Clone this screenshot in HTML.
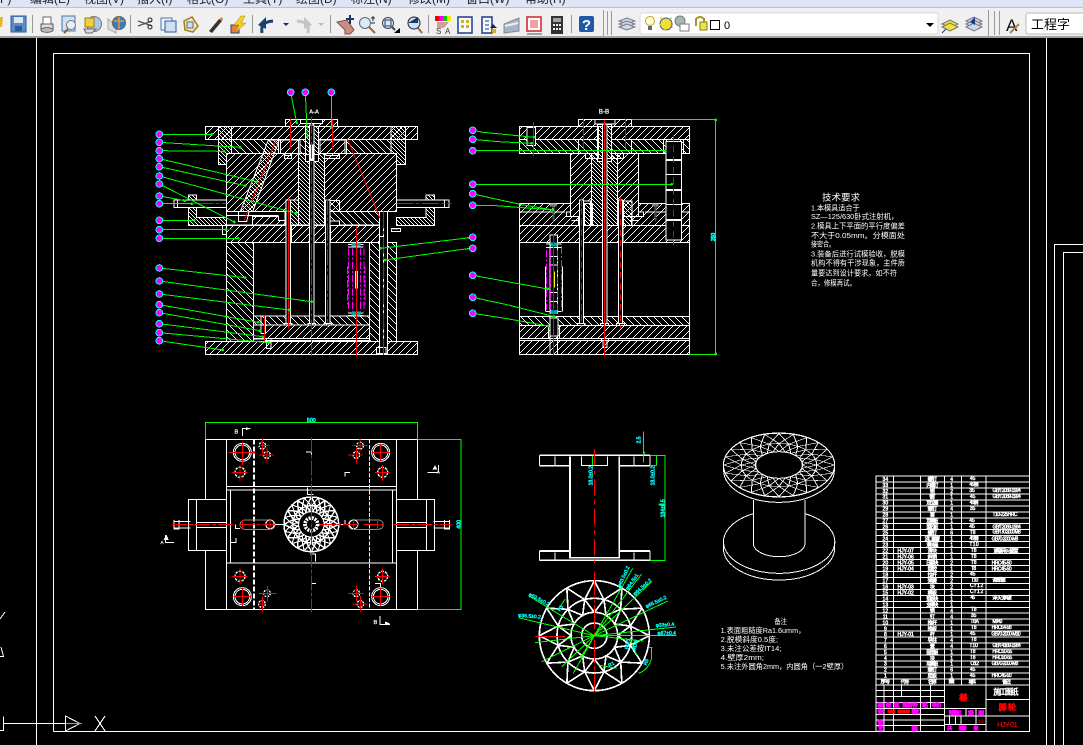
<!DOCTYPE html>
<html><head><meta charset="utf-8"><style>
html,body{margin:0;padding:0;background:#000;width:1083px;height:745px;overflow:hidden}
svg{display:block}
text{font-family:"Liberation Sans","Noto Sans CJK SC",sans-serif}
.d{shape-rendering:crispEdges}
.o{fill:none;stroke:#fff;stroke-width:3}
.k{fill:#000;stroke:#fff;stroke-width:3}
.a{fill:url(#h1);stroke:#fff;stroke-width:3}
.b{fill:url(#h2);stroke:#fff;stroke-width:3}
.c{fill:url(#h3);stroke:#fff;stroke-width:3}
.r{fill:none;stroke:#f00;stroke-width:3}
.rd{fill:none;stroke:#f00;stroke-width:3;stroke-dasharray:50 8 10 8}
.g{fill:none;stroke:#0f0;stroke-width:3}
.dot{fill:none;stroke:#0f0;stroke-width:8;stroke-linecap:round}
.m{fill:none;stroke:#f0f;stroke-width:3;stroke-dasharray:22 6 6 6}
.bub{fill:#f0f;stroke:#0ff;stroke-width:3}
.t{fill:#fff;stroke:#fff;stroke-width:.7;font-size:15px;text-anchor:middle}
.w{fill:#fff;font-size:23px}
.cy{fill:#0ff;stroke:#0ff;stroke-width:.6;font-size:15px;text-anchor:middle}
.mg{fill:#f0f;stroke:#f0f;stroke-width:1;font-size:15px;text-anchor:middle}
.rt{fill:#f00;stroke:#f00;stroke-width:1;text-anchor:middle}
.menu{font-size:12px;fill:#222}
</style></head><body>
<svg width="1083" height="745" viewBox="0 0 1083 745" xmlns="http://www.w3.org/2000/svg">
<defs>
<pattern id="h1" width="21" height="21" patternUnits="userSpaceOnUse"><path fill="#fff" shape-rendering="crispEdges" d="M18 0h3v3h-3zM15 3h3v3h-3zM12 6h3v3h-3zM9 9h3v3h-3zM6 12h3v3h-3zM3 15h3v3h-3zM0 18h3v3h-3z"/></pattern>
<pattern id="h2" width="21" height="21" patternUnits="userSpaceOnUse"><path fill="#fff" shape-rendering="crispEdges" d="M0 0h3v3h-3zM3 3h3v3h-3zM6 6h3v3h-3zM9 9h3v3h-3zM12 12h3v3h-3zM15 15h3v3h-3zM18 18h3v3h-3z"/></pattern>
<pattern id="h3" width="12" height="12" patternUnits="userSpaceOnUse"><path fill="#fff" shape-rendering="crispEdges" d="M0 0h3v3h-3zM3 3h3v3h-3zM6 6h3v3h-3zM9 9h3v3h-3z"/></pattern>
<circle id="bu" r="10" class="bub"/>
<path id="wd" d="M0 -165L29 -108.2L82.5 -142.9M29 -108.2L35 -60.6L79.2 -79.2"/>
<g id="wheel" fill="none" stroke="#fff">
<circle r="165"/><circle r="112"/><circle r="70"/><circle r="38"/>
<use href="#wd"/><use href="#wd" transform="rotate(30)"/><use href="#wd" transform="rotate(60)"/><use href="#wd" transform="rotate(90)"/><use href="#wd" transform="rotate(120)"/><use href="#wd" transform="rotate(150)"/><use href="#wd" transform="rotate(180)"/><use href="#wd" transform="rotate(210)"/><use href="#wd" transform="rotate(240)"/><use href="#wd" transform="rotate(270)"/><use href="#wd" transform="rotate(300)"/><use href="#wd" transform="rotate(330)"/>
</g>
</defs>
<rect width="1083" height="745" fill="#000"/>

<!-- frames -->
<g class="d" fill="none" stroke="#fff" stroke-width="1">
<path d="M36.5 38V745M1046.5 38V745"/>
<path d="M53.5 731.5V53.5H1029.5V731.5H53.5"/>
<path d="M1083 244.5H1054.5V745M1083 252.5H1063.5V745"/>
<path d="M4 723.5H65M3.5 716.5V730.5H0M65.5 716V731L80 723.5ZM95 716L105 731M105 716L95 731M0 619L5 612M0 656.5H3.5L1 647"/>
</g>
<path class="d" d="M66 723.5H82" stroke="#999" fill="none"/>

<!-- MAIN SECTION -->
<g class="d" transform="translate(150,85) scale(.333333333)">
<rect class="a" x="406" y="103" width="157" height="21"/>
<rect class="k" x="452" y="103" width="66" height="12"/>
<rect class="a" x="166" y="124" width="637" height="40"/>
<rect class="b" x="245" y="164" width="478" height="42"/>
<path class="c" d="M205 124H245V206H229V239H205Z"/>
<path class="c" d="M723 124H767V239H740V206H723Z"/>
<path class="k" d="M385 165H450V205H425V220H403V205H385Z"/>
<path class="a" d="M392 165H445V205H424V212H405V205H392Z"/>
<path class="k" d="M505 165H590V205H568V220H523V205H505Z"/>
<path class="a" d="M510 165H585V205H566V212H528V205H510Z"/>
<rect class="a" x="229" y="206" width="216" height="174"/>
<rect class="a" x="523" y="206" width="217" height="174"/>
<rect class="c" x="445" y="206" width="78" height="214"/>
<path class="k" d="M466 124H506V230H466Z"/>
<rect class="c" x="466" y="124" width="12" height="85"/>
<rect class="c" x="492" y="124" width="14" height="85"/>
<path class="c" d="M355 165H388L297 410H265V395Z"/>
<path class="k" d="M229 380H405V420H229Z"/>
<path class="a" d="M307 395H385V407H405V420H307Z"/>
<path class="k" d="M265 380H297L290 410H265Z"/>
<path class="o" d="M229 392H385"/>
<path class="b" d="M540 347H568V380H688V420H568V408H540Z"/>
<path class="k" d="M420 345H445V420H420Z"/>
<rect class="c" x="422" y="345" width="23" height="75"/>
<rect class="c" x="115" y="330" width="25" height="15"/>
<rect class="c" x="828" y="330" width="26" height="15"/>
<path class="c" d="M115 368H140V397H229V421H115Z"/>
<path class="c" d="M854 368H828V397H740V421H854Z"/>
<rect class="k" x="72" y="345" width="157" height="23"/>
<rect class="k" x="740" y="345" width="157" height="23"/>
<path class="o" d="M82 345V368M884 345V368M217 421V449H229M752 430H725V440H752Z"/>
<rect class="a" x="229" y="421" width="181" height="52"/>
<rect class="a" x="424" y="421" width="54" height="52"/>
<rect class="a" x="492" y="421" width="34" height="52"/>
<rect class="a" x="541" y="421" width="147" height="52"/>
<rect class="b" x="229" y="473" width="82" height="296"/>
<rect class="b" x="658" y="473" width="30" height="296"/>
<rect class="b" x="712" y="473" width="28" height="296"/>
<rect class="b" x="311" y="693" width="347" height="27"/>
<rect class="a" x="343" y="720" width="315" height="40"/>
<rect class="k" x="311" y="720" width="32" height="42"/>
<path class="o" d="M311 760H658M343 766H658"/>
<rect class="a" x="166" y="769" width="637" height="40"/>
<rect class="k" x="408" y="345" width="14" height="370"/>
<rect class="k" x="478" y="120" width="14" height="595"/>
<rect class="k" x="526" y="345" width="14" height="370"/>
<path class="o" d="M404 715H426V720H404ZM474 715H496V720H474ZM522 715H544V720H522Z" stroke-width="4"/>
<rect class="k" x="688" y="380" width="24" height="425"/>
<path class="o" d="M700 380V790M680 787H708V805H680ZM688 455H700M333 695V745H346V695M350 760V790H363V760"/>
<rect x="478" y="178" width="14" height="50" fill="#fff"/>
<!-- spring -->
<path class="m" d="M596 490V680M607 490V680M631 490V680M642 490V680M592 545V665M645 545V665"/>
<path d="M594 478H640M594 692H640M594 486H640M594 684H640" stroke="#fff" stroke-width="3"/>
<rect x="605" y="474" width="26" height="10" fill="#0aa"/><rect x="605" y="680" width="26" height="12" fill="#0aa"/>
<rect x="615" y="558" width="9" height="52" fill="#ff0"/>
<!-- reds -->
<path class="r" d="M421 100V190M547 103V190M592 160L690 400M415 340V730M619 425V815M343 690V770M232 434H248M724 434H745"/>
<path class="rd" d="M484 95V815M532 340V730M700 380V815M140 355H229M740 355H905M378 165L282 408M90 355H140"/>
<!-- leaders -->
<path class="g" d="M28 148H185M28 172L155 180L270 187M28 197L222 199M28 221L320 290M28 245L285 302M28 273L290 345L438 385M28 297L253 411M28 333L105 347M28 356H125M28 406H133M28 434H228M28 460H265M28 549L285 578M28 588L485 650M28 627L418 675M28 659L325 712M28 683L330 737M28 716L338 755M28 743L357 773M28 767L218 795M422 22L440 113M466 22L472 155M544 22V127M960 458L692 490M960 490L705 525"/>
<path class="dot" d="M185 148h0M270 187h0M222 199h0M320 290h0M285 302h0M438 385h0M253 411h0M105 347h0M125 356h0M133 406h0M228 434h0M265 460h0M285 578h0M485 650h0M418 675h0M325 712h0M330 737h0M338 755h0M357 773h0M218 795h0M440 113h0M472 155h0M544 127h0M692 490h0M705 525h0"/>
<g>
<use href="#bu" x="28" y="148"/><use href="#bu" x="28" y="172"/><use href="#bu" x="28" y="197"/><use href="#bu" x="28" y="221"/><use href="#bu" x="28" y="245"/><use href="#bu" x="28" y="273"/><use href="#bu" x="28" y="297"/><use href="#bu" x="28" y="333"/><use href="#bu" x="28" y="356"/><use href="#bu" x="28" y="406"/><use href="#bu" x="28" y="434"/><use href="#bu" x="28" y="460"/><use href="#bu" x="28" y="549"/><use href="#bu" x="28" y="588"/><use href="#bu" x="28" y="627"/><use href="#bu" x="28" y="659"/><use href="#bu" x="28" y="683"/><use href="#bu" x="28" y="716"/><use href="#bu" x="28" y="743"/><use href="#bu" x="28" y="767"/><use href="#bu" x="422" y="22"/><use href="#bu" x="466" y="22"/><use href="#bu" x="544" y="22"/>
</g>
<text x="492" y="86" class="t" style="font-size:17px">A-A</text>
</g>

<!-- SECTION B-B -->
<g class="d" transform="translate(465,100) scale(.333333333)">
<rect class="a" x="340" y="58" width="160" height="21"/>
<rect class="k" x="390" y="58" width="60" height="14"/>
<rect class="a" x="163" y="79" width="511" height="39"/>
<rect class="b" x="163" y="118" width="511" height="42"/>
<rect class="k" x="186" y="82" width="25" height="55"/>
<path class="k" d="M340 118H500V160H476V175H440V160H400V175H362V160H340Z" style="fill:url(#h2)"/>
<rect class="a" x="316" y="160" width="64" height="190"/>
<rect class="a" x="458" y="160" width="62" height="190"/>
<rect class="c" x="380" y="160" width="78" height="217"/>
<rect class="k" x="398" y="74" width="42" height="110"/>
<path class="c" d="M400 80H412V175H400ZM426 80H440V175H426Z"/>
<path class="a" d="M163 310H316V336H305V350H340V376H163Z"/>
<path class="a" d="M674 310H520V336H535V350H500V376H674Z"/>
<path class="o" d="M163 336H300M540 336H674M320 362H345M495 362H520"/>
<rect class="k" x="356" y="303" width="20" height="74"/>
<rect class="c" x="358" y="310" width="24" height="66"/>
<rect class="c" x="476" y="303" width="25" height="74"/>
<rect class="a" x="163" y="376" width="180" height="52"/>
<rect class="a" x="356" y="376" width="56" height="52"/>
<rect class="a" x="426" y="376" width="34" height="52"/>
<rect class="a" x="474" y="376" width="200" height="52"/>
<path class="o" d="M163 428V650M674 428V650"/>
<rect class="k" x="603" y="125" width="47" height="295"/>
<path class="o" d="M603 178H650M603 182H650M603 224H650M603 268H650M603 272H650M603 314H650M603 358H650M603 362H650"/>
<path class="o" d="M595 118V160M655 118V160" />
<rect class="b" x="163" y="650" width="511" height="26"/>
<rect class="a" x="163" y="676" width="511" height="39"/>
<rect class="o" x="163" y="715" width="511" height="7"/>
<rect class="a" x="163" y="722" width="511" height="42"/>
<rect class="k" x="255" y="654" width="24" height="54"/>
<path class="o" d="M250 676V715M284 676V715M255 708V764M278 708V764M410 715H430V722H410ZM414 722V742H426V722"/>
<rect class="k" x="343" y="300" width="13" height="370"/>
<rect class="k" x="412" y="72" width="14" height="598"/>
<rect class="k" x="460" y="300" width="13" height="370"/>
<path class="o" d="M338 670H360V676H338ZM407 670H430V676H407ZM455 670H478V676H455Z"/>
<rect x="255" y="310" width="20" height="10" fill="#888"/><rect x="561" y="310" width="20" height="10" fill="#888"/>
<rect x="262" y="320" width="7" height="38" fill="#666"/><rect x="568" y="320" width="7" height="38" fill="#666"/>
<!-- spring -->
<path class="k" d="M255 405H278V640H255Z"/>
<path class="m" d="M244 450V630M256 450V630M278 450V630M290 440V630"/>
<path class="o" d="M242 500V635M293 500V635M243 432H290M243 442H290M243 635H290M256 470H278M256 495H278M256 578H278M256 605H278"/>
<rect x="256" y="428" width="22" height="12" fill="#0aa"/><rect x="256" y="630" width="22" height="12" fill="#0aa"/>
<rect x="264" y="515" width="6" height="48" fill="#ff0"/>
<path class="r" d="M205 66V170M355 55V145M481 55V145M349 292V320M418 60V770M466 292V320M265 400V765M265 315V365M571 315V365"/>
<path class="rd" d="M349 292V680M466 292V685M626 105V437" style="stroke-dasharray:20 12"/>
<path class="g" d="M500 58H752V764H674M23 91L55 97L208 112M23 118L100 125L200 130M23 152H600M23 253H620M23 281L60 290L175 315L265 330M23 316H80L265 330M23 526L248 567M23 592L130 615L268 650M23 640L120 655L250 678M0 414L15 412M0 448L15 445"/>
<path class="dot" d="M208 112h0M200 130h0M600 152h0M620 253h0M265 330h0M248 567h0M268 650h0M250 678h0M752 60h0M752 762h0"/>
<use href="#bu" x="23" y="91"/><use href="#bu" x="23" y="118"/><use href="#bu" x="23" y="152"/><use href="#bu" x="23" y="253"/><use href="#bu" x="23" y="281"/><use href="#bu" x="23" y="316"/><use href="#bu" x="23" y="412"/><use href="#bu" x="23" y="445"/><use href="#bu" x="23" y="526"/><use href="#bu" x="23" y="592"/><use href="#bu" x="23" y="640"/>
<text x="417" y="41" class="t" style="font-size:19px">B-B</text>
<text class="cy" transform="translate(750,411) rotate(-90)" style="stroke-width:2">250</text>
</g>

<!-- PLAN VIEW -->
<g class="d" transform="translate(160,410) scale(.333333333)">
<path class="o" d="M136 268V88H772V268M136 421V598H772V421"/>
<rect class="o" x="199" y="88" width="510" height="510"/>
<path class="o" d="M199 229H709M199 240H709M212 240V459M697 240V459"/>
<path class="o" d="M199 459H709" stroke-width="5"/>
<rect class="o" x="85" y="268" width="114" height="153"/>
<rect class="o" x="709" y="268" width="115" height="153"/>
<path class="o" d="M109 268V421M799 268V421M42 334H92M42 354H92M42 330V357H57V330M110 337H199M110 352H199M709 337H799M709 352H799M820 334H868M820 354H868M853 330V357H868V330"/>
<path d="M282 88V598" stroke="#fff" stroke-width="5" stroke-dasharray="16 5" fill="none"/>
<path d="M628 88V598" stroke="#fff" stroke-width="3" stroke-dasharray="12 5" fill="none"/>
<g fill="none" stroke="#fff" stroke-width="3">
<circle cx="247" cy="127" r="27"/><circle cx="247" cy="127" r="22"/><circle cx="662" cy="127" r="27"/><circle cx="662" cy="127" r="22"/><circle cx="247" cy="560" r="27"/><circle cx="247" cy="560" r="22"/><circle cx="662" cy="560" r="27"/><circle cx="662" cy="560" r="22"/>
<circle cx="240" cy="187" r="15" stroke-width="4" stroke-dasharray="8 3"/><circle cx="668" cy="187" r="15" stroke-width="4" stroke-dasharray="8 3"/><circle cx="240" cy="499" r="15" stroke-width="4" stroke-dasharray="8 3"/><circle cx="668" cy="499" r="15" stroke-width="4" stroke-dasharray="8 3"/>
<circle cx="307" cy="107" r="10" stroke-width="4" stroke-dasharray="6 3"/><circle cx="321" cy="135" r="10" stroke-width="4" stroke-dasharray="6 3"/><circle cx="600" cy="107" r="10" stroke-width="4" stroke-dasharray="6 3"/><circle cx="589" cy="135" r="10" stroke-width="4" stroke-dasharray="6 3"/><circle cx="321" cy="550" r="10" stroke-width="4" stroke-dasharray="6 3"/><circle cx="306" cy="582" r="10" stroke-width="4" stroke-dasharray="6 3"/><circle cx="589" cy="550" r="10" stroke-width="4" stroke-dasharray="6 3"/><circle cx="601" cy="582" r="10" stroke-width="4" stroke-dasharray="6 3"/>
</g>
<g fill="none" stroke="#888" stroke-width="3"><rect x="240" y="330" width="105" height="28" rx="14"/><rect x="565" y="330" width="105" height="28" rx="14"/></g>
<g fill="none" stroke="#fff" stroke-width="3"><circle cx="330" cy="343" r="13"/><circle cx="581" cy="343" r="13"/><path d="M345 343H375M535 343H565"/></g>
<use href="#wheel" transform="translate(454,343) scale(.497)" stroke-width="9"/>
<use href="#wheel" transform="translate(454,343) scale(.497) rotate(15)" stroke-width="7"/>
<circle cx="454" cy="343" r="38" fill="#000" stroke="#fff" stroke-width="3"/>
<circle cx="454" cy="343" r="19" fill="none" stroke="#fff" stroke-width="11" stroke-dasharray="6 3"/>
<path class="o" d="M455 126H438M455 126V140M555 200V187H570M442 232V254H460M555 330V344H540M227 343V356H240M212 398H228V384M467 455V432H450M454 520H468M454 505V520M645 520H662V532"/>
<path class="o" d="M247 78V55H272M802 187H835M835 165V187M42 398H17V375M660 618V643H690" stroke-width="3"/>
<path d="M258 52L272 56L258 60ZM818 178L825 165L832 178ZM10 390L20 375L26 390ZM675 635L690 640L675 646Z" fill="#fff"/>
<text x="229" y="71" class="t" style="font-size:17px">B</text><text x="835" y="190" class="t" style="font-size:14px">A</text><text x="6" y="402" class="t" style="font-size:14px">A</text><text x="646" y="642" class="t" style="font-size:17px">B</text>
<g class="r">
<path d="M207 127H285M247 95V165M296 107H328M307 85V130M297 135H342M321 112V160M578 107H622M600 85V125M564 135H608M589 112V160M635 127H690M662 100V155M216 187H262M240 165V213M645 187H690M668 165V213M216 499H262M240 476V524M645 499H690M668 476V524M296 550H350M322 528V575M295 582H316M307 560V605M564 550H610M589 528V575M578 582H622M601 558V605M635 560H690M662 532V588M220 560H275M247 532V588M248 330V358M330 330V358M580 330V358M653 330V358"/>
</g>
<path class="r" d="M36 343H225M238 343H345M480 343H600M610 343H670M702 343H875M454 82V608" stroke-dasharray="45 6 12 6"/>
<path class="g" d="M136 88V37H772V88M772 88H903V598H772"/>
<text x="454" y="36" class="cy" style="stroke-width:1.5;font-size:16px">500</text>
<text class="cy" transform="translate(901,343) rotate(-90)" style="stroke-width:1.5;font-size:16px">400</text>
</g>

<!-- SPOOL SECTION AND TOP VIEW -->
<g class="d" transform="translate(510,425) scale(.333333333)">
<path fill="none" stroke="#fff" stroke-width="5" d="M88 91H420M88 122H180M328 122H420M88 378H180M328 378H420M88 406H420M180 95V398H328V95"/>
<path class="o" d="M88 91V122M135 95V120M215 95V122H292V95M328 95V120M372 95V120M420 91V122M88 378V406M135 382V406M372 382V406M420 378V406M180 398H328"/>
<path d="M253 72V415" stroke="#f00" stroke-width="3" stroke-dasharray="50 14 12 14" fill="none"/>
<path class="g" d="M400 20V112M248 91V122M420 91H465V406H420M420 122H440V91M400 90L405 80"/>
<rect x="445" y="235" width="20" height="7" fill="#0f0"/>
<text class="cy" transform="translate(247,152) rotate(-90)" style="stroke-width:1.5">18.0±0.2</text>
<text class="cy" transform="translate(434,152) rotate(-90)" style="stroke-width:1.5">18.0±0.2</text>
<text class="cy" transform="translate(463,250) rotate(-90)" style="stroke-width:1.5">184±0.5</text>
<text class="cy" transform="translate(392,45) rotate(-90)" style="stroke-width:1.5">2.5</text>
<use href="#wheel" transform="translate(253,632)" stroke-width="5"/>
<path d="M253 440V800" stroke="#f00" stroke-width="3" stroke-dasharray="70 10 12 10" fill="none"/>
<path class="r" d="M75 634H165"/>
<path class="g" d="M253 632L368 430M253 632L395 447M253 632L425 470M253 632L473 528M253 632L498 606M253 632H500M253 632L55 512M253 632L25 578M253 632L75 653M253 632L95 710M253 632L155 725M253 632L190 745M253 632L210 700M253 632L400 648M360 640L380 690M265 720L320 730M425 668V700Q415 735 385 745M415 668H428M145 555L165 522"/>
<g class="cy" style="font-size:15px;stroke-width:1.2">
<text transform="translate(345,457) rotate(-65)">φ63.5±0.2</text>
<text transform="translate(370,473) rotate(-55)">φ64.5±1</text>
<text transform="translate(400,490) rotate(-42)">φ64.5±0.2</text>
<text transform="translate(440,535) rotate(-25)">φ65.5±0.2</text>
<text transform="translate(465,604) rotate(-4)">φ33±0.4</text>
<text transform="translate(470,630)">φ87±0.4</text>
<text transform="translate(85,527) rotate(28)">φ63.5±0.2</text>
<text transform="translate(58,578) rotate(5)">φ36.5±0.2</text>
<text transform="translate(155,552) rotate(-60)">R1</text>
<text transform="translate(413,713) rotate(-70)">R5</text>
<text transform="translate(306,722) rotate(-30)">R1</text>
<text transform="translate(357,658) rotate(-80)">R0.5</text>
<text transform="translate(380,662) rotate(-80)">R0.5</text>
</g>
</g>

<!-- 3D SPOOL -->
<g class="d" transform="translate(700,420) scale(.333333333)">
<path class="o" d="M160 281A167 95 0 1 0 315 281M70 365V385A167 95 0 0 0 404 385V365M160 240V370A77 40 0 0 0 315 370V240"/>
<path class="o" d="M71 140V152A166 95 0 0 0 403 152V140"/>
<ellipse cx="237" cy="135" rx="167" ry="96" fill="#000" stroke="#fff" stroke-width="3"/>
<use href="#wheel" transform="translate(237,135) scale(1.01,.575)" stroke-width="3"/>
<use href="#wheel" transform="translate(237,135) scale(1.01,.575) rotate(15)" stroke-width="3"/>
<ellipse cx="237" cy="135" rx="70" ry="40" fill="#000" stroke="#fff" stroke-width="3"/>
<g fill="#fff" font-size="23">
<text x="242" y="612" text-anchor="middle" textLength="38" lengthAdjust="spacingAndGlyphs">备注</text>
<text x="62" y="639" textLength="254" lengthAdjust="spacingAndGlyphs">1.表面粗糙度Ra1.6umm，</text>
<text x="62" y="666" textLength="172" lengthAdjust="spacingAndGlyphs">2.脱模斜度0.5度;</text>
<text x="62" y="693" textLength="182" lengthAdjust="spacingAndGlyphs">3.未注公差按IT14;</text>
<text x="62" y="720" textLength="130" lengthAdjust="spacingAndGlyphs">4.壁厚2mm;</text>
<text x="62" y="747" textLength="383" lengthAdjust="spacingAndGlyphs">5.未注外圆角2mm，内圆角（一2壁厚）</text>
</g>
</g>

<!-- TECH TEXT -->
<g transform="translate(800,185) scale(.333333333)" fill="#fff" font-size="23">
<text x="66" y="47" font-size="27" textLength="114" lengthAdjust="spacingAndGlyphs">技术要求</text>
<text x="33" y="76" textLength="146" lengthAdjust="spacingAndGlyphs">1.本模具适合于</text>
<text x="33" y="102" textLength="262" lengthAdjust="spacingAndGlyphs">SZ—125/630卧式注射机，</text>
<text x="33" y="131" textLength="282" lengthAdjust="spacingAndGlyphs">2.模具上下平面的平行度偏差</text>
<text x="33" y="159" textLength="282" lengthAdjust="spacingAndGlyphs">不大于0.05mm。分模面处</text>
<text x="33" y="185" textLength="72" lengthAdjust="spacingAndGlyphs">接密合。</text>
<text x="33" y="214" textLength="282" lengthAdjust="spacingAndGlyphs">3.装备后进行试模验收，脱模</text>
<text x="33" y="241" textLength="282" lengthAdjust="spacingAndGlyphs">机构不得有干涉现象，主件质</text>
<text x="33" y="271" textLength="258" lengthAdjust="spacingAndGlyphs">量要达到设计要求。如不符</text>
<text x="33" y="302" textLength="135" lengthAdjust="spacingAndGlyphs">合，修模再试。</text>
</g>

<!-- TITLE BLOCK -->
<g class="d" transform="translate(870,470) scale(.333333333)">
<rect class="k" x="18" y="18" width="460" height="766"/>
<path fill="none" stroke="#fff" stroke-width="3" d="M18 18H478M18 36H478M18 54H478M18 72H478M18 90H478M18 107.5H478M18 125.4H478M18 143.3H478M18 161.2H478M18 179.1H478M18 197H478M18 214.9H478M18 232.8H478M18 250.7H478M18 268.6H478M18 286.5H478M18 304.4H478M18 322.3H478M18 340.2H478M18 358.1H478M18 376H478M18 393.9H478M18 411.8H478M18 429.7H478M18 447.6H478M18 465.5H478M18 483.4H478M18 501.3H478M18 519.2H478M18 537.1H478M18 555H478M18 572.9H478M18 590.8H478M18 608.7H478M18 626.6H478M18 644.5H478"/>
<path fill="none" stroke="#fff" stroke-width="3" d="M70 18V644M151 18V644M223 18V785M275 18V644M348 18V785"/>
<g class="t" style="stroke-width:1.4">
<text x="46" y="33">34</text><text x="46" y="51">33</text><text x="46" y="69">32</text><text x="46" y="86">31</text><text x="46" y="104">30</text><text x="46" y="122">29</text><text x="46" y="140">28</text><text x="46" y="158">27</text><text x="46" y="176">26</text><text x="46" y="193">25</text><text x="46" y="211">24</text><text x="46" y="229">23</text><text x="46" y="247">22</text><text x="46" y="265">21</text><text x="46" y="283">20</text><text x="46" y="301">19</text><text x="46" y="319">18</text><text x="46" y="337">17</text><text x="46" y="355">16</text><text x="46" y="373">15</text><text x="46" y="391">14</text><text x="46" y="409">13</text><text x="46" y="427">12</text><text x="46" y="445">11</text><text x="46" y="463">10</text><text x="46" y="481">9</text><text x="46" y="498">8</text><text x="46" y="516">7</text><text x="46" y="534">6</text><text x="46" y="552">5</text><text x="46" y="570">4</text><text x="46" y="587">3</text><text x="46" y="605">2</text><text x="46" y="623">1</text>
<text x="187" y="33" textLength="28">螺钉</text><text x="187" y="51" textLength="36">内螺钉</text><text x="187" y="69" textLength="18">销</text><text x="187" y="86" textLength="18">销钉</text><text x="187" y="104" textLength="36">定位圈</text><text x="187" y="122" textLength="28">螺钉</text><text x="187" y="140" textLength="18">套</text><text x="187" y="158" textLength="36">定模板</text><text x="187" y="176" textLength="36">型芯板</text><text x="187" y="193" textLength="28">螺钉</text><text x="187" y="211" textLength="46">浇口套管</text><text x="187" y="229" textLength="36">滑块座</text><text x="187" y="247" textLength="28">滑块</text><text x="187" y="265" textLength="28">斜销</text><text x="187" y="283" textLength="36">压紧块</text><text x="187" y="301" textLength="28">型腔</text><text x="187" y="319" textLength="28">拉杆</text><text x="187" y="337" textLength="28">弹簧</text><text x="187" y="355" textLength="18">块</text><text x="187" y="373" textLength="28">模板</text><text x="187" y="391" textLength="36">垫板块</text><text x="187" y="409" textLength="36">支撑块</text><text x="187" y="427" textLength="18">销</text><text x="187" y="445" textLength="18">钉</text><text x="187" y="463" textLength="28">推杆</text><text x="187" y="481" textLength="28">推板</text><text x="187" y="498" textLength="18">杆</text><text x="187" y="516" textLength="28">导柱</text><text x="187" y="534" textLength="18">套</text><text x="187" y="552" textLength="36">固定板</text><text x="187" y="570" textLength="18">块</text><text x="187" y="587" textLength="36">动模板</text><text x="187" y="605" textLength="28">螺钉</text><text x="187" y="623" textLength="28">底板</text>
<text x="245" y="33">4</text><text x="245" y="51">1</text><text x="245" y="69">2</text><text x="245" y="86">1</text><text x="245" y="104">1</text><text x="245" y="122">4</text><text x="245" y="140">1</text><text x="245" y="158">1</text><text x="245" y="176">1</text><text x="245" y="193">6</text><text x="245" y="211">1</text><text x="245" y="229">1</text><text x="245" y="247">1</text><text x="245" y="265">1</text><text x="245" y="283">2</text><text x="245" y="301">1</text><text x="245" y="319">2</text><text x="245" y="337">2</text><text x="245" y="355">2</text><text x="245" y="373">1</text><text x="245" y="391">1</text><text x="245" y="409">1</text><text x="245" y="427">4</text><text x="245" y="445">4</text><text x="245" y="463">1</text><text x="245" y="481">1</text><text x="245" y="498">1</text><text x="245" y="516">4</text><text x="245" y="534">4</text><text x="245" y="552">1</text><text x="245" y="570">1</text><text x="245" y="587">1</text><text x="245" y="605">6</text><text x="245" y="623">1</text>
<text x="308" y="30">45</text><text x="312" y="48" textLength="28">45钢</text><text x="306" y="66">35</text><text x="308" y="84">45</text><text x="312" y="102" textLength="26">45钢</text><text x="308" y="120">35</text><text x="306" y="156">45</text><text x="306" y="174">45</text><text x="308" y="192">T8</text><text x="312" y="210" textLength="28">45钢</text><text x="312" y="228" textLength="28">T10</text><text x="311" y="246">T8</text><text x="311" y="264">T8</text><text x="311" y="282">T8</text><text x="311" y="300" textLength="15">T8</text><text x="308" y="316">45</text><text x="314" y="334" textLength="22">T10</text><text x="320" y="351" textLength="40">Cr12</text><text x="320" y="369" textLength="40">Cr12</text><text x="308" y="387" textLength="14">45</text><text x="311" y="423">T8</text><text x="311" y="441">35</text><text x="314" y="459" textLength="26">T8A</text><text x="311" y="477">T8</text><text x="308" y="495">45</text><text x="311" y="513">T8</text><text x="311" y="531">T10</text><text x="308" y="549">T8</text><text x="308" y="567">T8</text><text x="314" y="585" textLength="26">Cr12</text><text x="308" y="603">45</text><text x="308" y="621">45</text>
<text x="107" y="247">HJY-07</text><text x="107" y="265">HJY-06</text><text x="107" y="283">HJY-05</text><text x="107" y="301">HJY-04</text><text x="107" y="355">HJY-03</text><text x="107" y="373">HJY-02</text><text x="107" y="498">HJY-01</text>
<text x="410" y="66" textLength="85">GB/T2089-1994</text><text x="410" y="84" textLength="85">GB/T2089-1994</text><text x="405" y="138" textLength="75">T10-225HRC</text><text x="410" y="176" textLength="85">GB/T2089-1994</text><text x="410" y="190" textLength="85">GB/T70-2000-M8</text><text x="405" y="211" textLength="80">GB70-2000-M8</text><text x="408" y="248" textLength="75">渗碳淬火硬度</text><text x="395" y="283" textLength="60">HRC45-50</text><text x="395" y="301" textLength="60">HRC45-50</text><text x="387" y="335" textLength="40">调质处理</text><text x="396" y="389" textLength="58">淬火渗碳</text><text x="382" y="459" textLength="30">M8×40</text><text x="395" y="477" textLength="60">HRC54-58</text><text x="408" y="496" textLength="88">GB70-2000-M10</text><text x="410" y="531" textLength="85">GB/T4169-1984</text><text x="397" y="549" textLength="60">HRC50-55</text><text x="397" y="567" textLength="60">HRC50-55</text><text x="405" y="585" textLength="80">GB70-2000-M8</text><text x="395" y="621" textLength="60">HRC45-50</text>
<text x="46" y="641" textLength="28">序号</text><text x="105" y="640" textLength="26">代号</text><text x="187" y="641" textLength="26">名称</text><text x="245" y="639" textLength="18">数量</text><text x="307" y="640" textLength="22">材料</text><text x="410" y="641" textLength="26">备注</text>
</g>
<!-- lower grid -->
<path fill="none" stroke="#fff" stroke-width="3" d="M18 644V785M18 662H223M18 680H223M18 698H223M18 715H223M18 733H223M18 750H223M18 766H223M42 644V785M70 644V785M94 644V680M151 644V785M181 644V715M223 715H348M223 738H348M223 763H348M288 715V738M318 715V763M239 738V763M257 738V763M273 738V763M348 688H478M348 738H478"/>
<g class="mg" style="font-size:15px;stroke-width:2">
<text x="31" y="711" textLength="18">标记</text><text x="55" y="711" textLength="18">处数</text><text x="80" y="711" textLength="20">分区</text><text x="120" y="711" textLength="48">更改文件号</text><text x="165" y="711" textLength="20">签名</text><text x="200" y="711" textLength="30">年月日</text>
<text x="32" y="730" textLength="20">设计</text><text x="137" y="730" textLength="26">标准化</text>
<text x="31" y="764" textLength="18">审核</text><text x="31" y="782" textLength="18">工艺</text><text x="134" y="782" textLength="20">批准</text>
<text x="256" y="733" textLength="38">阶段标记</text><text x="303" y="735" textLength="18">重量</text><text x="333" y="735" textLength="18">比例</text>
<text x="239" y="780" textLength="12">共</text><text x="278" y="780" textLength="24">张第</text><text x="318" y="780" textLength="12">张</text>
</g>
<rect x="52" y="718" width="25" height="13" fill="#f00"/><rect x="82" y="718" width="38" height="13" fill="#f00"/>
<text x="333" y="757" class="rt" style="font-size:13px;stroke-width:.4">1:1</text>
<text x="280" y="690" class="rt" style="font-size:22px;stroke-width:2" textLength="26">材料</text>
<text x="408" y="673" class="t" style="font-size:24px;stroke-width:1.4" textLength="76">施工图纸</text>
<text x="412" y="720" class="rt" style="font-size:24px;stroke-width:2" textLength="52">脚轮</text>
<text x="412" y="771" class="rt" style="font-size:22px;stroke-width:.4" textLength="62">HJY-01</text>
</g>

<!-- TOOLBAR -->
<rect x="0" y="0" width="1083" height="8" fill="#dfe5f6"/>
<rect x="0" y="7" width="1083" height="1" fill="#b9c0d6"/>
<rect x="0" y="8" width="1083" height="29" fill="#f0f0f0"/>
<rect x="0" y="36" width="1083" height="2" fill="#a0a0a0"/>
<g class="menu">
<text x="-4" y="3">(F)</text><text x="30" y="3">编辑(E)</text><text x="84" y="3">视图(V)</text><text x="137" y="3">插入(I)</text><text x="187" y="3">格式(O)</text><text x="243" y="3">工具(T)</text><text x="296" y="3">绘图(D)</text><text x="351" y="3">标注(N)</text><text x="408" y="3">修改(M)</text><text x="466" y="3">窗口(W)</text><text x="525" y="3">帮助(H)</text>
</g>
<g stroke="#999" stroke-width="1" fill="none">
<path d="M32.5 15V33M130.5 15V33M252.5 15V33M330.5 15V33M428.5 15V33M571.5 15V33M603.5 10V36M607.5 11V35M611.5 11V35M988.5 10V36M994.5 11V35M999.5 11V35"/>
</g>
<!-- left icons -->
<path d="M0 17H3L2 27H0Z" fill="#e8b820"/>
<rect x="11" y="16" width="15" height="16" fill="#5a8cc8" stroke="#2a5a98"/><rect x="14" y="17" width="9" height="6" fill="#dde8f5"/><rect x="15" y="26" width="7" height="5" fill="#2a5a98"/>
<path d="M41 24H53V30H41Z" fill="#ddd" stroke="#555"/><path d="M43 17H51V24H43Z" fill="#fff" stroke="#666"/><ellipse cx="47" cy="30" rx="6" ry="2.4" fill="#bbb" stroke="#666"/>
<rect x="62" y="16" width="13" height="15" fill="#cfe0f5" stroke="#4a78a8"/><circle cx="71" cy="25" r="4.5" fill="#e8eef8" stroke="#777"/><path d="M68 29L64 33" stroke="#a05a20" stroke-width="2"/>
<circle cx="94" cy="24" r="7.5" fill="#a8c8e8" stroke="#777"/><rect x="85" y="18" width="9" height="9" fill="#f0d040" stroke="#a08010"/><path d="M84 29H96L92 33H86Z" fill="#ddd" stroke="#666"/>
<path d="M108 19L116 26V33L108 29Z" fill="#ddd" stroke="#aaa"/><circle cx="119" cy="23" r="6.5" fill="#3a7ac8" stroke="#666"/><path d="M114 21H124M119 17V29" stroke="#e8a020" stroke-width="1.5"/>
<!-- edit -->
<path d="M138 21L152 26M138 26L152 21" stroke="#555" stroke-width="1.2" fill="none"/><circle cx="150" cy="20" r="2" fill="none" stroke="#222"/><circle cx="150" cy="27" r="2" fill="none" stroke="#222"/>
<rect x="161" y="18" width="11" height="12" fill="#eef3fa" stroke="#4a78a8"/><rect x="165" y="21" width="11" height="11" fill="#cfe0f5" stroke="#2a5a98"/>
<path d="M184 21L192 17L198 26L193 32L185 30Z" fill="#f5e8c0" stroke="#a08020" stroke-width="1.5"/><rect x="187" y="22" width="6" height="6" fill="#cfe0f5" stroke="#667"/>
<path d="M209 31L219 19L222 21L212 33Z" fill="#333"/><path d="M219 19L222 17L223 19L222 21Z" fill="#c88a50"/>
<rect x="231" y="25" width="8" height="8" fill="#ef7a30" stroke="#1a4a90"/><path d="M241 16L234 25H239L235 33L246 23H241L245 16Z" fill="#f5d020" stroke="#a08010" stroke-width=".5"/>
<!-- undo -->
<path d="M262 33C261 26 262 22 273 21" fill="none" stroke="#1a3f70" stroke-width="3"/><path d="M258 25L266 17V29Z" fill="#1a3f70"/>
<path d="M283 23H289L286 26Z" fill="#1a2a60"/>
<path d="M308 33C309 26 308 22 297 21" fill="none" stroke="#c4c4c4" stroke-width="3"/><path d="M312 25L304 17V29Z" fill="#c4c4c4"/>
<path d="M318 23H324L321 26Z" fill="#bbb"/>
<!-- pan zoom -->
<path d="M337 22L345 30V34H350L354 30L347 20Z" fill="#c89080" stroke="#845"/><path d="M350 15V24M346 19H354" stroke="#1a3a6a" stroke-width="2"/>
<circle cx="365" cy="23" r="5.5" fill="#dbe8f5" stroke="#667"/><path d="M369 27L375 33" stroke="#a06a30" stroke-width="2"/><path d="M373 16V21M371 18H375M371 23H375" stroke="#222"/>
<circle cx="388" cy="23" r="5.5" fill="#dbe8f5" stroke="#445"/><rect x="385" y="20" width="6" height="6" fill="none" stroke="#1a3a6a"/><path d="M392 27L395 30" stroke="#445" stroke-width="2"/><path d="M394 33H400V28Z" fill="#000"/>
<circle cx="414" cy="23" r="6" fill="#cfe0f5" stroke="#223"/><path d="M418 28L422 33" stroke="#a06a30" stroke-width="2"/><path d="M408 23L418 17V23Z" fill="#1a3a6a"/>
<!-- props -->
<rect x="435" y="16" width="4" height="5" fill="#e00"/><rect x="439" y="16" width="4" height="5" fill="#e0e"/><rect x="443" y="16" width="4" height="5" fill="#0c0"/><rect x="447" y="16" width="4" height="5" fill="#ee0"/>
<path d="M437 22H449L444 28H437Z" fill="#d0a090"/><text x="445" y="34" font-size="8" fill="#333">A</text><text x="436" y="34" font-size="8" fill="#333">S</text>
<rect x="458" y="17" width="14" height="16" fill="#f8f8ff" stroke="#1a3a8a" stroke-width="1.5"/><path d="M461 20h3v3h-3zM466 20h3v3h-3zM461 25h3v3h-3zM466 25h3v3h-3z" fill="#d0b020"/>
<path d="M482 17H492V33H482Z" fill="#f8f8ff" stroke="#1a3a8a" stroke-width="1.5"/><path d="M485 21h4M485 25h4M485 29h4" stroke="#1a3a8a"/><path d="M493 24L497 28H490Z" fill="#223"/><rect x="492" y="29" width="4" height="4" fill="#d0b020"/>
<path d="M504 24L519 18V31L504 33Z" fill="#a8b4c4" stroke="#889"/><path d="M505 26L518 23" stroke="#eef" stroke-width="2"/>
<rect x="527" y="17" width="14" height="14" fill="#fff" stroke="#c22" stroke-width="1.5"/><path d="M530 20H538V28H530Z" fill="#f0a0a0"/><path d="M527 34H542" stroke="#555"/>
<rect x="551" y="16" width="12" height="18" fill="#333"/><rect x="553" y="18" width="8" height="4" fill="#9a9"/><path d="M553 24h2v2h-2zM556 24h2v2h-2zM559 24h2v2h-2zM553 28h2v2h-2zM556 28h2v2h-2zM559 28h2v2h-2z" fill="#eee"/>
<rect x="579" y="16" width="15" height="16" rx="2" fill="#1e5aa8"/><text x="586.5" y="30" font-size="15" font-weight="bold" fill="#fff" text-anchor="middle">?</text>
<!-- layer bar -->
<g fill="#cfd8e4" stroke="#778"><path d="M619 21L627 18L635 21L627 24Z"/><path d="M619 24L627 21L635 24L627 27Z"/><path d="M619 27L627 24L635 27L627 30Z"/></g>
<rect x="640" y="13" width="298" height="21" rx="2" fill="#fff" stroke="#d8d8d8"/>
<circle cx="650" cy="21" r="4.5" fill="#fffbd0" stroke="#c8a820"/><rect x="648" y="26" width="4" height="4" fill="#667"/>
<circle cx="666" cy="24" r="6" fill="#f5dc30" stroke="#3a5a90"/><rect x="660" y="18" width="12" height="12" fill="none" stroke="#c8b020" stroke-dasharray="2 8"/>
<circle cx="680" cy="21" r="5" fill="#a8b8a8" stroke="#778"/><rect x="680" y="24" width="9" height="7" fill="#fff" stroke="#778"/>
<path d="M696 26V19Q700 15 704 19V22" fill="none" stroke="#a89820" stroke-width="2"/><rect x="700" y="22" width="7" height="8" fill="#f0e050" stroke="#888010"/>
<rect x="710.5" y="20.5" width="9" height="9" fill="#fff" stroke="#000"/>
<text x="724" y="29" font-size="11" fill="#000">0</text>
<path d="M926 23H934L930 27Z" fill="#000"/>
<g fill="#f0e040" stroke="#776"><path d="M942 24L950 20L958 24L950 28Z"/><path d="M942 27L950 23L958 27L950 31Z"/></g><path d="M942 33L946 29" stroke="#1a3a8a"/>
<g fill="#cfd8e4" stroke="#778"><path d="M966 21L974 17L982 21L974 25Z"/><path d="M966 24L974 20L982 24L974 28Z"/><path d="M966 27L974 23L982 27L974 31Z"/></g><path d="M970 22L975 17V25Z" fill="#1a3a8a"/>
<text x="1006" y="31" font-size="17" fill="#111">A</text><path d="M1010 33L1019 24" stroke="#b08040" stroke-width="2"/>
<rect x="1026" y="13" width="60" height="21" rx="2" fill="#fff" stroke="#bbb"/>
<text x="1031" y="29" font-size="13" fill="#000">工程字</text>
</svg>
</body></html>
